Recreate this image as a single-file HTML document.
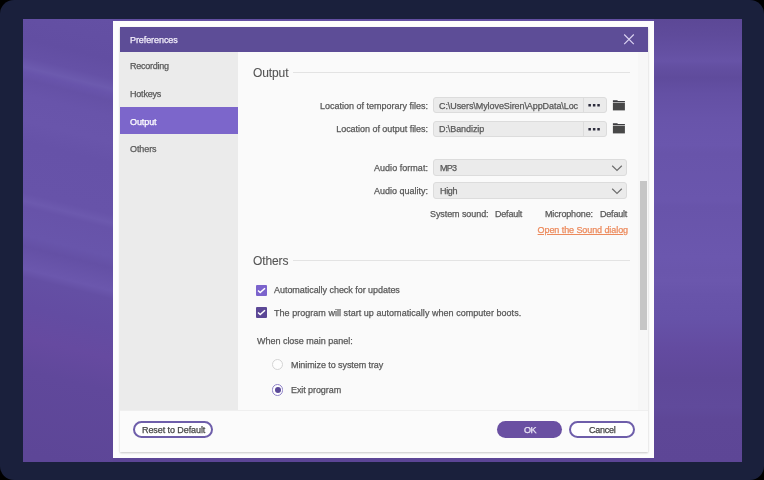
<!DOCTYPE html>
<html><head><meta charset="utf-8">
<style>
*{margin:0;padding:0;box-sizing:border-box}
html,body{width:764px;height:480px;overflow:hidden;background:#000}
body{position:relative;font-family:"Liberation Sans",sans-serif}
.a{position:absolute}
#frame{left:0;top:0;width:764px;height:480px;border-radius:14px;background:#1a203c}
#bg{left:23px;top:19px;width:719px;height:443px;background:linear-gradient(to bottom,#634fa2 0%,#6551a6 8%,#6652a8 12%,#6551a6 15%,#6653a9 20%,#6654ac 30%,#6856ae 55%,#6651a8 63%,#634aa0 72%,#5f4799 82%,#5c4596 100%);overflow:hidden}
#dlg{left:113px;top:21px;width:541px;height:437px;background:#fdfdfd}
#hdr{left:120px;top:27px;width:528px;height:25px;background:#5d4d97}
#side{left:120px;top:52px;width:118px;height:358px;background:#ebebeb}
#cont{left:238px;top:52px;width:410px;height:358px;background:#fafafa}
#foot{left:120px;top:410px;width:528px;height:42px;background:#fbfbfb;border-top:1px solid #efefef}
.t{position:absolute;will-change:transform;-webkit-text-stroke:0.25px currentColor;font-size:9px;line-height:11px;white-space:pre;color:#585858;letter-spacing:-0.08px}
.r{text-align:right}
.box{position:absolute;background:#ebebeb;border:1px solid #dcdcdc;border-radius:3px}
.sep{position:absolute;width:1px;background:#dcdcdc}
.dot{position:absolute;width:3px;height:3px;background:#2a2a3a}
.hl{position:absolute;height:1px;background:#e3e3e3}
.btn{position:absolute;border-radius:20px;height:17px}
</style></head>
<body>
<div class="a" id="frame"></div>
<div class="a" id="bg"></div>
<div class="a" style="left:23px;top:19px;width:90px;height:443px;background:linear-gradient(194deg,#6450a4 0px,#624ea2 40px,#6551a6 58px,#6c5aae 68px,#6854ab 73px,#6551a6 80px,#6854aa 95px,#6955ab 120px,#6652a8 140px,#6753a9 190px,#6c59ae 198px,#6753a9 204px,#6855ab 231px,#6450a5 242px,#6b57ad 264px,#644fa4 272px,#634ca2 300px,#664aa0 330px,#60489b 362px,#5d4697 443px)"></div>
<div class="a" style="left:654px;top:19px;width:88px;height:443px;background:linear-gradient(180deg,#5c4896 0px,#5f4b9b 16px,#634fa1 30px,#6753a7 42px,#634fa1 48px,#5f4b9c 59px,#6450a4 75px,#6854aa 100px,#6a56ad 126px,#6854aa 134px,#6a56ad 181px,#6854aa 188px,#6b57ae 238px,#6a56ac 252px,#6b57ad 262px,#6854aa 275px,#6652a8 300px,#634ba0 330px,#5f4899 360px,#604a9b 388px,#5e4797 400px,#5d4696 443px)"></div>
<div class="a" id="dlg"></div>
<div class="a" style="left:120px;top:27px;width:528px;height:425px;box-shadow:0 1px 2px rgba(0,0,0,.22)"></div>
<div class="a" id="hdr"></div>
<div class="t" style="left:130px;top:35px;color:#f2eefa">Preferences</div>
<svg class="a" style="left:623px;top:33px" width="12" height="12" viewBox="0 0 12 12"><path d="M1.2 1.5L10.8 11.1M10.8 1.5L1.2 11.1" stroke="#dcd4f2" stroke-width="1.15" fill="none"/></svg>
<div class="a" id="side"></div>
<div class="t" style="left:130px;top:61px;letter-spacing:-0.24px">Recording</div>
<div class="t" style="left:130px;top:89px;letter-spacing:-0.2px">Hotkeys</div>
<div class="a" style="left:120px;top:107px;width:118px;height:27px;background:#7c66cb"></div>
<div class="t" style="left:130px;top:117px;color:#fff">Output</div>
<div class="t" style="left:130px;top:144px">Others</div>
<div class="a" id="cont"></div>
<div class="a" id="foot"></div>

<!-- Output section -->
<div class="t" style="left:253px;top:66px;font-size:12px;line-height:14px;letter-spacing:-0.1px;-webkit-text-stroke:0.1px currentColor;color:#555">Output</div>
<div class="hl" style="left:293px;top:72px;width:337px"></div>

<div class="t r" style="left:300px;width:128px;top:101px;letter-spacing:0">Location of temporary files:</div>
<div class="box" style="left:433px;top:97px;width:174px;height:16px"></div>
<div class="sep" style="left:583px;top:98px;height:14px"></div>
<div class="a" style="left:434px;top:98px;width:143.5px;height:14px;overflow:hidden"><div class="t" style="left:5px;top:3px">C:\Users\MyloveSiren\AppData\Local</div></div>
<svg class="a" style="left:586px;top:103px" width="16" height="6" viewBox="0 0 16 6"><rect x="2.4" y="1" width="2.5" height="2.5" fill="#2c2c3c"/><rect x="6.9" y="1" width="2.5" height="2.5" fill="#2c2c3c"/><rect x="11.3" y="1" width="2.5" height="2.5" fill="#2c2c3c"/></svg>
<svg class="a" style="left:612px;top:100px" width="14" height="12" viewBox="0 0 14 12"><path d="M0.9 0.2H5.2L6 1.1H12.9V2.1H0.9Z" fill="#3c3c40"/><rect x="0.9" y="2.1" width="12" height="0.9" fill="#a8a8a8"/><rect x="0.9" y="3" width="12" height="7.4" fill="#484848"/></svg>

<div class="t r" style="left:300px;width:128px;top:124px;letter-spacing:-0.03px">Location of output files:</div>
<div class="box" style="left:433px;top:121px;width:174px;height:16px"></div>
<div class="sep" style="left:583px;top:122px;height:14px"></div>
<div class="t" style="left:439px;top:124px">D:\Bandizip</div>
<svg class="a" style="left:586px;top:127px" width="16" height="6" viewBox="0 0 16 6"><rect x="2.4" y="1" width="2.5" height="2.5" fill="#2c2c3c"/><rect x="6.9" y="1" width="2.5" height="2.5" fill="#2c2c3c"/><rect x="11.3" y="1" width="2.5" height="2.5" fill="#2c2c3c"/></svg>
<svg class="a" style="left:612px;top:123px" width="14" height="12" viewBox="0 0 14 12"><path d="M0.9 0.2H5.2L6 1.1H12.9V2.1H0.9Z" fill="#3c3c40"/><rect x="0.9" y="2.1" width="12" height="0.9" fill="#a8a8a8"/><rect x="0.9" y="3" width="12" height="7.4" fill="#484848"/></svg>

<div class="t r" style="left:300px;width:128px;top:163px;letter-spacing:0.04px">Audio format:</div>
<div class="box" style="left:433px;top:159px;width:194px;height:17px"></div>
<div class="t" style="left:440px;top:163px;letter-spacing:-0.7px">MP3</div>
<svg class="a" style="left:611px;top:164px" width="12" height="8" viewBox="0 0 12 8"><path d="M1.2 1.8L6 6.4L10.8 1.8" stroke="#6e6e6e" stroke-width="1.2" fill="none"/></svg>

<div class="t r" style="left:300px;width:128px;top:186px;letter-spacing:0">Audio quality:</div>
<div class="box" style="left:433px;top:182px;width:194px;height:17px"></div>
<div class="t" style="left:440px;top:186px;letter-spacing:-0.35px">High</div>
<svg class="a" style="left:611px;top:187px" width="12" height="8" viewBox="0 0 12 8"><path d="M1.2 1.8L6 6.4L10.8 1.8" stroke="#6e6e6e" stroke-width="1.2" fill="none"/></svg>

<div class="t" style="left:430px;top:209px">System sound:</div>
<div class="t" style="left:495px;top:209px;letter-spacing:-0.2px">Default</div>
<div class="t" style="left:545px;top:209px;letter-spacing:-0.15px">Microphone:</div>
<div class="t" style="left:600px;top:209px;letter-spacing:-0.2px">Default</div>
<div class="t r" style="left:500px;width:128px;top:225px;color:#ec8a5c;text-decoration:underline">Open the Sound dialog</div>

<!-- Others section -->
<div class="t" style="left:253px;top:254px;font-size:12px;line-height:14px;letter-spacing:-0.1px;-webkit-text-stroke:0.1px currentColor;color:#555">Others</div>
<div class="hl" style="left:293px;top:260px;width:337px"></div>

<div class="a" style="left:256px;top:285px;width:11px;height:11px;background:#7b63cc;border-radius:1px"></div>
<svg class="a" style="left:256px;top:285px" width="11" height="11" viewBox="0 0 11 11"><path d="M2 5.5L4.2 7.5L9 3.2" stroke="#fff" stroke-width="1.5" fill="none"/></svg>
<div class="t" style="left:274px;top:285px;letter-spacing:-0.04px">Automatically check for updates</div>

<div class="a" style="left:256px;top:307px;width:11px;height:11px;background:#5b4796;border-radius:1px"></div>
<svg class="a" style="left:256px;top:307px" width="11" height="11" viewBox="0 0 11 11"><path d="M2 5.5L4.2 7.5L9 3.2" stroke="#fff" stroke-width="1.5" fill="none"/></svg>
<div class="t" style="left:274px;top:308px;letter-spacing:0.035px">The program will start up automatically when computer boots.</div>

<div class="t" style="left:257px;top:336px;letter-spacing:-0.02px">When close main panel:</div>

<div class="a" style="left:272.2px;top:359.2px;width:11.2px;height:11.2px;border-radius:50%;border:1.5px solid #d4d4d4;background:#fdfdfd"></div>
<div class="t" style="left:291px;top:360px">Minimize to system tray</div>

<div class="a" style="left:272.2px;top:384.4px;width:11.2px;height:11.2px;border-radius:50%;border:1.2px solid #8f82c8;background:#fff"></div>
<div class="a" style="left:274.8px;top:387px;width:6.2px;height:6.2px;border-radius:50%;background:#5a4898"></div>
<div class="t" style="left:291px;top:385px">Exit program</div>

<!-- scrollbar -->
<div class="a" style="left:638px;top:52px;width:10px;height:358px;background:#f7f7f7"></div>
<div class="a" style="left:640px;top:181px;width:7px;height:149px;background:#c6c6c6"></div>

<!-- footer buttons -->
<div class="btn" style="left:133px;top:421px;width:80px;border:2px solid #6e5eaa;background:#fff"></div>
<div class="t" style="left:142px;top:425px;color:#444">Reset to Default</div>
<div class="btn" style="left:497px;top:421px;width:65px;background:#6a50a2"></div>
<div class="t" style="left:524px;top:425px;color:#ece8f6;letter-spacing:-0.6px">OK</div>
<div class="btn" style="left:569px;top:421px;width:66px;border:2px solid #6e5eaa;background:#fff"></div>
<div class="t" style="left:589px;top:425px;color:#444;letter-spacing:-0.27px">Cancel</div>
</body></html>
